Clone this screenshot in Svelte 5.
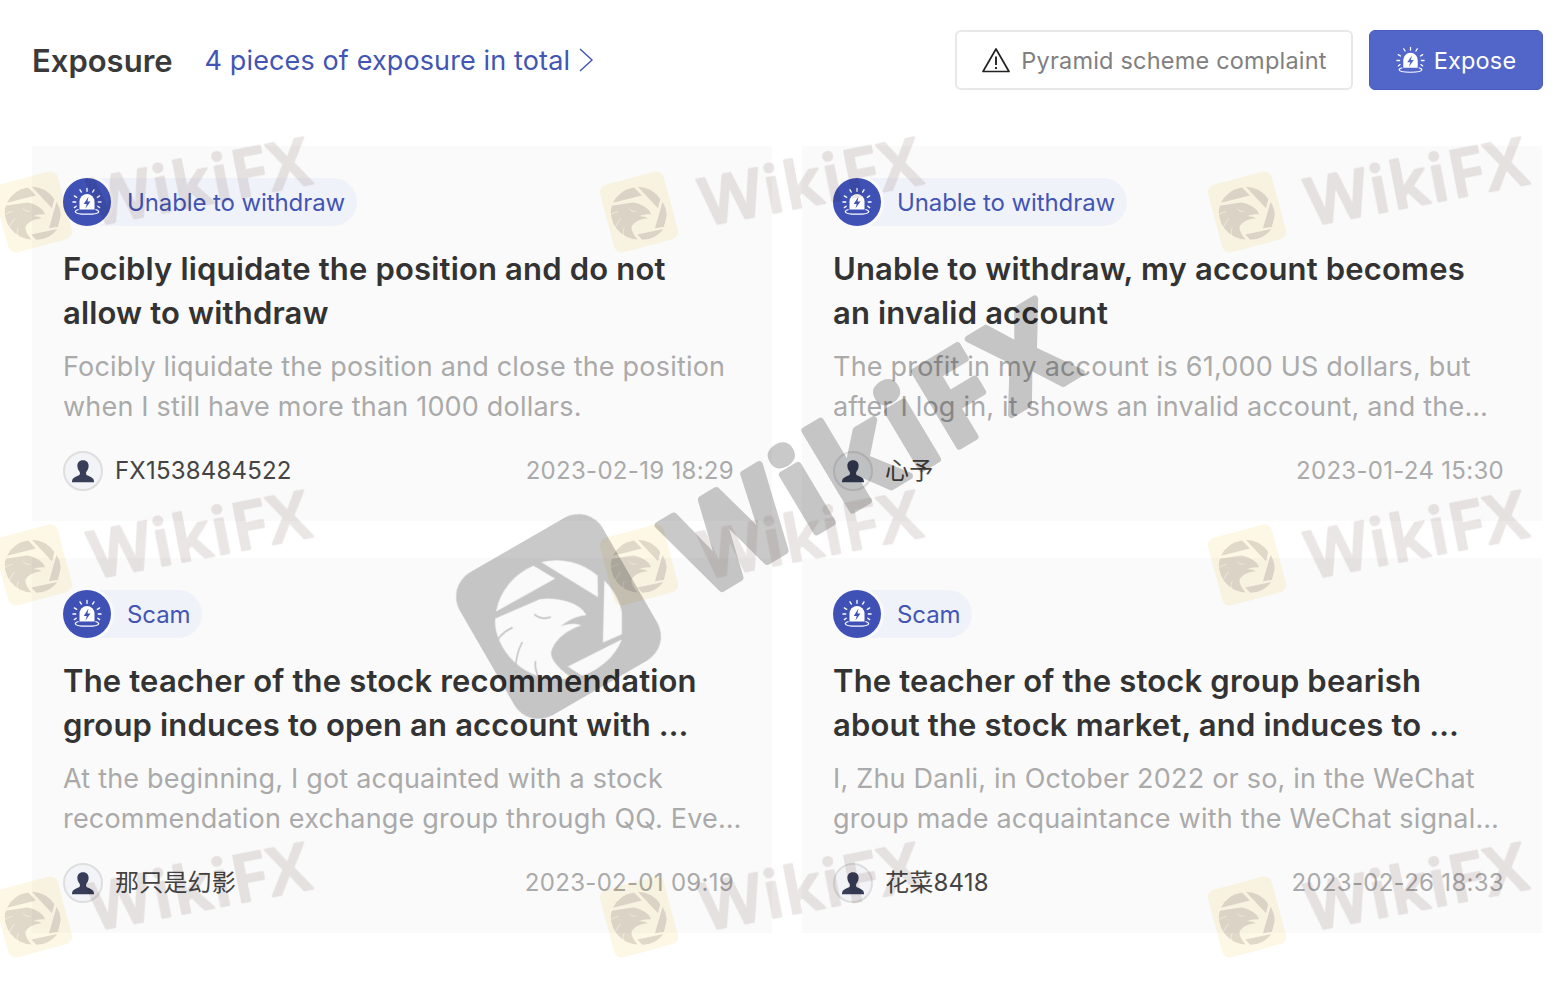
<script>
  const cards = [
    {
      tag: 'Unable to withdraw',
      title: ['Focibly liquidate the position and do not', 'allow to withdraw'],
      desc: ['Focibly liquidate the position and close the position', 'when I still have more than 1000 dollars.'],
      user: 'FX1538484522',
      date: '2023-02-19 18:29'
    },
    {
      tag: 'Unable to withdraw',
      title: ['Unable to withdraw, my account becomes', 'an invalid account'],
      desc: ['The profit in my account is 61,000 US dollars, but', 'after I log in, it shows an invalid account, and the…'],
      user: '心予',
      date: '2023-01-24 15:30'
    },
    {
      tag: 'Scam',
      title: ['The teacher of the stock recommendation', 'group induces to open an account with …'],
      desc: ['At the beginning, I got acquainted with a stock', 'recommendation exchange group through QQ. Eve…'],
      user: '那只是幻影',
      date: '2023-02-01 09:19'
    },
    {
      tag: 'Scam',
      title: ['The teacher of the stock group bearish', 'about the stock market, and induces to …'],
      desc: ['I, Zhu Danli, in October 2022 or so, in the WeChat', 'group made acquaintance with the WeChat signal…'],
      user: '花菜8418',
      date: '2023-02-26 18:33'
    }
  ]

  // watermark tiles, x/y = centre of the yellow logo, tx = start of its text
  const marks = []
  for (const y of [212, 565, 917]) {
    for (const [x, tx] of [[33, 94], [639, 705], [1247, 1311]]) marks.push({ x, y, tx })
  }
</script>

<svg class="defs" width="0" height="0" aria-hidden="true">
  <symbol id="alarm" viewBox="0 0 32 32">
    <path d="M8 24v-8.500a8 8 0 0 1 16 0V24z" fill="currentColor" />
    <path d="M17.500 10.500l-5 7.500h3.200l-1.400 5 5.400-7.500h-3.200z" fill="var(--bolt)" />
    <path d="M7 24c-2 .5-3.500 1.300-3.500 2.300 0 1.600 5.600 2.700 12.500 2.700s12.500-1.100 12.500-2.700c0-1-1.500-1.800-3.500-2.300" fill="none" stroke="currentColor" stroke-width="1.300" />
    <path d="M16 1.500v3M8.500 3L10 5.500M23.500 3L22 5.500M2.500 9.500L5 11M29.500 9.500L27 11M1 16h3M28 16h3M2.500 22l2-1.500M29.500 22l-2-1.500" fill="none" stroke="currentColor" stroke-width="1.400" stroke-linecap="round" />
  </symbol>
  <symbol id="eagle" viewBox="165 130 380 380">
    <path d="M168 305A190 190 0 0 1 280 168L345 207Z" fill="var(--shape)" />
    <path d="M303 157A190 190 0 0 1 472 198L473 262Z" fill="var(--shape)" />
    <path d="M492 212A190 190 0 0 1 548 372L488 398Z" fill="var(--shape)" />
    <path d="M545 388A190 190 0 0 1 425 497L383 470Z" fill="var(--shape)" />
    <path d="M163 327L300 268C345 262 420 275 438 316C410 318 385 330 360 350C385 340 410 340 423 346C385 360 345 385 333 425C330 450 360 480 395 503A190 190 0 0 1 163 327Z" fill="var(--shape)" />
    <path d="M284 315C298 325 316 328 330 322M172 392C182 375 198 362 216 354M226 474C228 445 234 420 246 398M294 498C288 485 284 470 286 455" fill="none" stroke="var(--cut)" stroke-width="5" stroke-linecap="round" />
  </symbol>
  <symbol id="person" viewBox="0 0 40 40">
    <path d="M20 8c-4.200 0-6.600 3-6.200 7 .2 2.600 1.200 4.600 2.600 6 .4 1.600.2 3-.8 3.700-2.800 1.300-6.100 2.200-7.100 4.300-.6 1.300-.8 2.500-.8 3.500h24.600c0-1-.2-2.200-.8-3.500-1-2.100-4.300-3-7.100-4.300-1-.7-1.200-2.100-.8-3.700 1.400-1.400 2.400-3.400 2.600-6 .4-4-2-7-6.200-7z" fill="#383e57" />
  </symbol>
</svg>

<main class="page">
  <header class="head">
    <h1>Exposure</h1>
    <a class="total">
      4 pieces of exposure in total
      <svg width="16" height="26" viewBox="0 0 16 26"><path d="M2 2l12 11L2 24" fill="none" stroke="currentColor" stroke-width="1.400" /></svg>
    </a>
    <div class="actions">
      <button class="complaint">
        <svg width="30" height="26" viewBox="0 0 30 26">
          <path d="M15 2L2 24.500h26z" fill="none" stroke="#222" stroke-width="1.700" stroke-linejoin="round" />
          <path d="M15 9.500v8.500M15 20v2" fill="none" stroke="#222" stroke-width="1.900" />
        </svg>
        Pyramid scheme complaint
      </button>
      <button class="expose">
        <svg class="alarm btn-alarm" width="29" height="29"><use href="#alarm" /></svg>
        Expose
      </button>
    </div>
  </header>

  <section class="grid">
    {#each cards as c}
      <article class="card">
        <div class="tag">
          <span class="badge"><svg class="alarm" width="30" height="30"><use href="#alarm" /></svg></span>
          <span class="tag-text">{c.tag}</span>
        </div>
        <h2>
          {#each c.title as line}<span class="line">{line}</span>{/each}
        </h2>
        <p class="desc">
          {#each c.desc as line}<span class="line">{line}</span>{/each}
        </p>
        <div class="meta">
          <span class="avatar"><svg width="36" height="36"><use href="#person" /></svg></span>
          <span class="user">{c.user}</span>
          <span class="date">{c.date}</span>
        </div>
      </article>
    {/each}
  </section>

  <div class="overlay" aria-hidden="true">
    {#each marks as m}
      <div class="tile" style="left:{m.x}px;top:{m.y}px"><svg width="56" height="56"><use href="#eagle" /></svg></div>
    {/each}
    <svg class="wm" width="1560" height="986">
      <text class="wm-big" transform="translate(703 600) rotate(-31)">WikiFX</text>
      <g class="wm-small">
        {#each marks as m}
          <text transform="translate({m.tx} {m.y + 14}) rotate(-11)">WikiFX</text>
        {/each}
      </g>
    </svg>
    <div class="big-tile"><svg width="127" height="127"><use href="#eagle" /></svg></div>
  </div>
</main>

<style>
  :global(body) {
    margin: 0;
    background: #fff;
    font-family: Inter, 'Noto Sans CJK SC', sans-serif;
  }

  .defs {
    position: absolute;
  }

  .page {
    position: relative;
    width: 1560px;
    height: 986px;
    overflow: hidden;
    box-sizing: border-box;
    padding: 30px 17px 0 32px;
  }

  .head {
    display: flex;
    align-items: center;
    height: 60px;
  }

  h1 {
    margin: 0 32px 0 0;
    font-size: 31px;
    font-weight: 600;
    color: #3a3a3a;
  }

  .total {
    display: flex;
    align-items: center;
    gap: 8px;
    font-size: 27px;
    letter-spacing: 0.12px;
    color: #4355b4;
  }

  .actions {
    margin-left: auto;
    display: flex;
    gap: 16px;
  }

  button {
    display: flex;
    align-items: center;
    justify-content: center;
    height: 60px;
    box-sizing: border-box;
    border-radius: 6px;
    font: inherit;
    font-size: 23.5px;
    letter-spacing: 0.2px;
  }

  .complaint {
    width: 398px;
    gap: 10px;
    background: #fff;
    border: 2px solid #e8e8e8;
    color: #808080;
  }

  .expose {
    width: 174px;
    gap: 9px;
    background: #5265c8;
    border: 1px solid #4a5cbd;
    color: #fff;
  }

  .alarm {
    color: #fff;
    --bolt: #3f51b5;
  }

  .btn-alarm {
    --bolt: #5265c8;
  }

  .grid {
    display: grid;
    grid-template-columns: 740px 740px;
    column-gap: 30px;
    row-gap: 37px;
    margin-top: 56px;
  }

  .card {
    height: 375px;
    box-sizing: border-box;
    padding: 32px 31px 0;
    background: #fafafa;
  }

  .tag {
    display: inline-flex;
    align-items: center;
    height: 48px;
    border-radius: 24px;
    background: #f0f2f9;
    padding-right: 12px;
  }

  .badge {
    width: 48px;
    height: 48px;
    margin-right: 16px;
    border-radius: 50%;
    background: #3f51b5;
    box-shadow: 0 0 0 3px #fafafa;
    display: flex;
    align-items: center;
    justify-content: center;
  }

  .tag-text {
    font-size: 24px;
    letter-spacing: -0.1px;
    color: #4355b4;
  }

  h2 {
    margin: 21px 0 0;
    font-size: 31px;
    line-height: 44px;
    font-weight: 600;
    letter-spacing: 0.17px;
    color: #333;
  }

  .line {
    display: block;
    white-space: nowrap;
  }

  .desc {
    margin: 12px 0 0;
    font-size: 27px;
    line-height: 40px;
    letter-spacing: 0.2px;
    color: #aaa;
  }

  .meta {
    display: flex;
    align-items: center;
    margin-top: 24px;
    height: 40px;
    font-size: 24px;
    line-height: 40px;
    letter-spacing: 0.2px;
  }

  .avatar {
    width: 40px;
    height: 40px;
    box-sizing: border-box;
    margin-right: 12px;
    border: 2px solid #dedede;
    border-radius: 50%;
    background: #f3f4f7;
    overflow: hidden;
  }

  .avatar svg {
    display: block;
  }

  .user {
    color: #444;
  }

  .date {
    margin-left: auto;
    margin-right: 7px;
    color: #aaa;
    letter-spacing: 0.3px;
  }

  /* watermark sits over the page and only darkens what is under it */
  .overlay {
    position: absolute;
    inset: 0;
    pointer-events: none;
    mix-blend-mode: multiply;
  }

  .wm {
    position: absolute;
    left: 0;
    top: 0;
    mix-blend-mode: multiply;
  }

  .wm text {
    font-family: 'Open Sans', sans-serif;
    stroke-linejoin: round;
    white-space: pre;
  }

  .wm-small {
    opacity: 0.17;
  }

  .wm-small text {
    font-size: 66px;
    font-weight: 600;
    letter-spacing: 2px;
    fill: #876969;
    stroke: #876969;
    stroke-width: 2.500px;
  }

  .wm .wm-big {
    font-size: 122px;
    font-weight: 700;
    letter-spacing: 5px;
    fill: #c9c9c9;
    stroke: #c9c9c9;
    stroke-width: 7px;
  }

  .tile {
    position: absolute;
    width: 66px;
    height: 70px;
    margin: -35px 0 0 -33px;
    border-radius: 8px;
    background: rgba(250, 236, 190, 0.4);
    transform: rotate(-15deg);
    display: flex;
    align-items: center;
    justify-content: center;
    --shape: rgba(130, 120, 115, 0.24);
    --cut: rgba(250, 244, 225, 0.9);
  }

  .tile svg,
  .big-tile svg {
    transform: rotate(30deg);
  }

  .big-tile {
    position: absolute;
    left: 476px;
    top: 534px;
    width: 165px;
    height: 165px;
    border-radius: 28px;
    background: #c9c9c9;
    mix-blend-mode: multiply;
    transform: rotate(-30deg);
    display: flex;
    align-items: center;
    justify-content: center;
    --shape: #fff;
    --cut: #c9c9c9;
  }
</style>
